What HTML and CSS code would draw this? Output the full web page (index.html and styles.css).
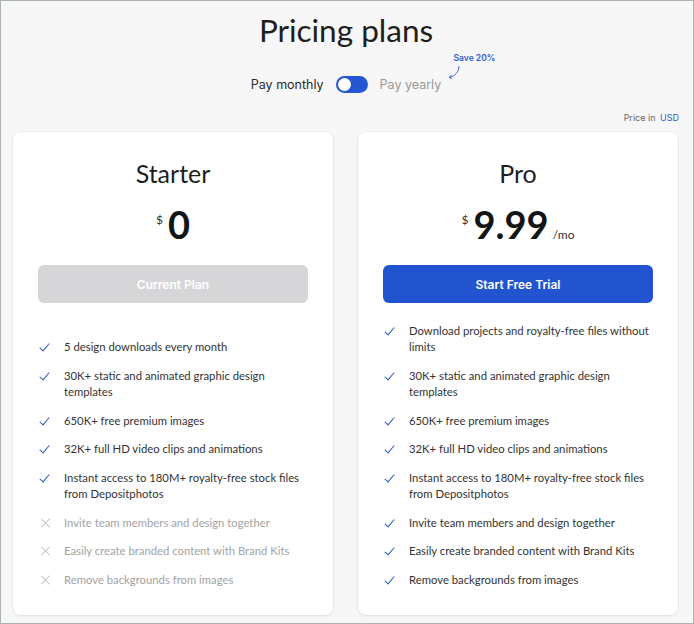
FILE: index.html
```html
<!DOCTYPE html>
<html>
<head>
<meta charset="utf-8">
<link rel="stylesheet" href="styles.css">
</head>
<body>
<div class="frame">
  <h1 class="title">Pricing plans</h1>
  <div class="billing">
    <span class="bill-label active">Pay monthly</span>
    <span class="switch"><span class="knob"></span></span>
    <span class="bill-label muted yearly">Pay yearly
      <span class="save">Save 20%</span>
      <svg class="save-arrow" width="16" height="16" viewBox="0 0 16 16"><path d="M13 1 C13 7 9 11 3 12.5" fill="none" stroke="#2f5bd0" stroke-width="0.9"/><path d="M5.5 10.2 L3 12.5 L6 13.6" fill="none" stroke="#2f5bd0" stroke-width="0.9"/></svg>
    </span>
  </div>
  <div class="currency">Price in <span class="usd">USD</span></div>
  <div class="plans">
    <div class="card">
      <h2 class="plan-name">Starter</h2>
      <div class="price"><span class="cur">$</span><span class="amount">0</span></div>
      <div class="btn btn-disabled">Current Plan</div>
      <ul class="features">
        <li><span class="ico check"></span><span>5 design downloads every month</span></li>
        <li><span class="ico check"></span><span>30K+ static and animated graphic design templates</span></li>
        <li><span class="ico check"></span><span>650K+ free premium images</span></li>
        <li><span class="ico check"></span><span>32K+ full HD video clips and animations</span></li>
        <li><span class="ico check"></span><span>Instant access to 180M+ royalty-free stock files from Depositphotos</span></li>
        <li class="off"><span class="ico cross"></span><span>Invite team members and design together</span></li>
        <li class="off"><span class="ico cross"></span><span>Easily create branded content with Brand Kits</span></li>
        <li class="off"><span class="ico cross"></span><span>Remove backgrounds from images</span></li>
      </ul>
    </div>
    <div class="card">
      <h2 class="plan-name">Pro</h2>
      <div class="price"><span class="cur">$</span><span class="amount">9.99</span><span class="per">/mo</span></div>
      <div class="btn btn-primary">Start Free Trial</div>
      <ul class="features">
        <li><span class="ico check"></span><span>Download projects and royalty-free files without limits</span></li>
        <li><span class="ico check"></span><span>30K+ static and animated graphic design templates</span></li>
        <li><span class="ico check"></span><span>650K+ free premium images</span></li>
        <li><span class="ico check"></span><span>32K+ full HD video clips and animations</span></li>
        <li><span class="ico check"></span><span>Instant access to 180M+ royalty-free stock files from Depositphotos</span></li>
        <li><span class="ico check"></span><span>Invite team members and design together</span></li>
        <li><span class="ico check"></span><span>Easily create branded content with Brand Kits</span></li>
        <li><span class="ico check"></span><span>Remove backgrounds from images</span></li>
      </ul>
    </div>
  </div>
</div>
</body>
</html>
```
FILE: styles.css
```css
* { box-sizing: border-box; }
html, body { margin: 0; padding: 0; }
body { font-family: Lato, "Noto Sans", sans-serif; color: #262626; }
.frame {
  width: 694px;
  height: 624px;
  border: 1px solid #a9b4b3;
  background: #f7f7f7;
  display: flex;
  flex-direction: column;
  padding: 0 14px 8px 12px;
}
.title {
  margin: 9px 0 0;
  font-size: 31.5px;
  line-height: 40px;
  font-weight: 400;
  text-align: center;
  color: #1e1e1e;
}
.billing {
  margin-top: 24px;
  height: 20px;
  display: flex;
  align-items: center;
  justify-content: center;
  gap: 12px;
  font-family: Inter, sans-serif;
  font-size: 12.5px;
}
.bill-label.active { color: #2b2b2b; }
.bill-label.muted { color: #9a9a9a; }
.yearly { position: relative; }
.switch {
  width: 32px;
  height: 17px;
  border-radius: 9px;
  background: #2456d3;
  display: flex;
  align-items: center;
  padding: 0 2px;
}
.knob {
  width: 13px;
  height: 13px;
  border-radius: 50%;
  background: #fff;
}
.save {
  position: absolute;
  left: 74px;
  top: -24px;
  font-size: 8.5px;
  font-weight: 600;
  color: #2f5bd0;
  white-space: nowrap;
}
.save-arrow {
  position: absolute;
  left: 66px;
  top: -12px;
}
.currency {
  margin-top: 18px;
  text-align: right;
  font-family: Inter, sans-serif;
  font-size: 9px;
  line-height: 12px;
  color: #666;
}
.usd { color: #2f5bd0; margin-left: 2px; }
.plans {
  margin-top: 8px;
  flex: 1;
  display: grid;
  grid-template-columns: 320px 320px;
  gap: 25px;
}
.card {
  background: #fff;
  border-radius: 8px;
  box-shadow: 0 0 0 1px rgba(0,0,0,0.03), 0 1px 3px rgba(0,0,0,0.07);
  padding: 26px 25px 27px 25px;
  display: flex;
  flex-direction: column;
}
.plan-name {
  margin: 0;
  text-align: center;
  font-size: 25px;
  line-height: 30px;
  font-weight: 400;
  color: #1e1e1e;
}
.price {
  margin-top: 16px;
  height: 40px;
  display: flex;
  justify-content: center;
  align-items: baseline;
  color: #141414;
}
.cur {
  font-size: 12px;
  margin-right: 5px;
  position: relative;
  top: -15px;
  color: #333;
}
.amount {
  font-size: 38px;
  line-height: 40px;
  font-weight: 700;
}
.per {
  font-size: 12px;
  margin-left: 4px;
  color: #333;
}
.btn {
  margin-top: 21px;
  height: 38px;
  border-radius: 6px;
  display: flex;
  align-items: center;
  justify-content: center;
  font-family: Inter, sans-serif;
  font-size: 12px;
  font-weight: 600;
  color: #fff;
}
.btn-disabled { background: #d6d6d8; }
.btn-primary { background: #2254cf; }
.features {
  list-style: none;
  margin: auto 0 0;
  padding: 0;
  display: flex;
  flex-direction: column;
  gap: 12.7px;
  font-size: 11.3px;
  line-height: 16px;
  color: #333;
}
.features li {
  display: flex;
  align-items: flex-start;
}
.features li.off { color: #a3a3a3; }
.ico {
  flex: none;
  width: 13px;
  height: 16px;
  margin: 0 12px 0 1px;
  position: relative;
}
.check::after {
  content: "";
  position: absolute;
  left: 3px;
  top: 2px;
  width: 4px;
  height: 9px;
  border-right: 1.4px solid #2a56c6;
  border-bottom: 1.4px solid #2a56c6;
  transform: rotate(40deg);
}
.cross::before, .cross::after {
  content: "";
  position: absolute;
  left: 6px;
  top: 2px;
  width: 1.2px;
  height: 12px;
  background: #c6c6c6;
  transform: rotate(45deg);
}
.cross::after { transform: rotate(-45deg); }
```
